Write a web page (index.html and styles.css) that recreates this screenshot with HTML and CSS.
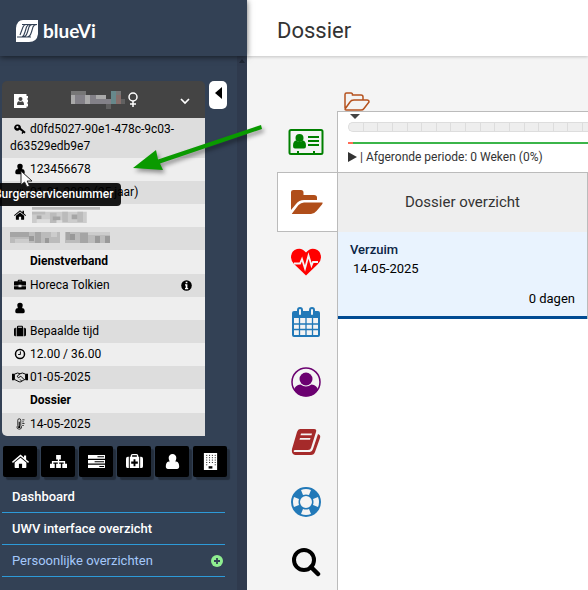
FILE: index.html
```html
<!DOCTYPE html>
<html lang="nl">
<head>
    <meta charset="UTF-8">
    <meta name="viewport" content="width=device-width, initial-scale=1.0">
    <title>Dossier</title>
    <link rel="stylesheet" href="styles.css">
</head>
<body>
    <!-- icons that are used more than once -->
    <svg class="sprite" width="0" height="0" aria-hidden="true">
        <symbol id="icon-user" viewBox="0 0 16 16"><path d="M8 1a3.6 3.6 0 0 1 3.6 3.8C11.600 7 10 9 8 9S4.400 7 4.400 4.800A3.600 3.600 0 0 1 8 1zM4.500 8Q6 10 8 10T11.500 8C13.600 8.300 14.300 10.500 14.300 12.800 14.300 14.300 13.500 15 12.300 15H3.700C2.500 15 1.700 14.300 1.700 12.800 1.700 10.500 2.400 8.300 4.500 8z"/><path d="M5 7H11V11H5z"/></symbol>
        <symbol id="icon-home" viewBox="0 0 16 16"><path d="M8 4.500 13.500 9V13.500a.7.7 0 0 1-.7.7H9.500V10.200H6.500V14.200H3.200a.7.7 0 0 1-.7-.7V9z"/><path d="M8 1.500 11.300 4.300V2.300H13.300V6L16 8.300 15.200 9.300 8 3.300.8 9.300 0 8.300z"/></symbol>
    </svg>

    <div class="app">
        <header class="brand">
            <svg class="brand-logo" viewBox="0 0 22 22" aria-hidden="true">
                <path d="M7 0H22V14Q21 22 13 22H0V8Q1 0 7 0z" fill="#fff"/>
                <path d="M1 17H6Q8 16 9 12L10.500 7Q11.500 4.500 14 4.500M7 17Q10 17 11.500 12L13 7Q14 4.500 17 4.500M11 17Q14 17 15.500 12L17 7Q18 4.500 21 4.500M6 4.500H21M1 17H15M4 15 7 7Q8 4.500 10 4.500" fill="none" stroke="#334155" stroke-width="1.100"/>
            </svg>
            <span class="brand-name">blueVi</span>
        </header>
        <header class="page-header">
            <h1>Dossier</h1>
        </header>

        <aside class="sidebar">
            <div class="sidebar-content">
                <div class="person">
                    <div class="person-card">
                        <div class="person-header">
                            <svg class="icon-book" viewBox="0 0 15 15" aria-hidden="true"><path fill="#fff" d="M0 0H12.500V2H14V4.500H13V5.500H14V8.500H13V9.500H14V12.500H12.500V14H0z"/><circle cx="6.500" cy="5" r="2" fill="#444"/><path fill="#444" d="M3 11Q3 7.300 5 7.300Q6.500 8.300 8 7.300Q10 7.300 10 11z"/></svg>
                            <span class="person-name">
                                <svg class="mosaic-name" viewBox="0 0 54 18" aria-hidden="true"><path fill="#777" d="M0 0H15V4H0zM45 0H50V4H45z"/><path fill="#aaa" d="M0 4H4V13H0zM14 4H19V13H14zM25 4H35V8H25z"/><path fill="#838188" d="M4 4H14V13H4zM19 4H25V13H19zM25 8H40V13H25z"/><path fill="#67888b" d="M40 0H45V13H40z"/><path fill="#866e6b" d="M45 4H50V13H45z"/><path fill="#606060" d="M35 13H40V18H35zM50 8H54V13H50z"/></svg>
                                <svg class="icon-female" viewBox="0 0 12 16" aria-hidden="true"><circle cx="6" cy="5" r="4" fill="none" stroke="#fff" stroke-width="1.500"/><path d="M6 9V15M3 12H9" stroke="#fff" stroke-width="1.500"/></svg>
                            </span>
                            <svg class="icon-chevron" viewBox="0 0 10 8" aria-hidden="true"><path d="M1 2 5 6 9 2" fill="none" stroke="#fff" stroke-width="1.700"/></svg>
                        </div>
                        <ul class="person-rows">
                            <li><span class="row-icon"><svg viewBox="0 0 16 16" aria-hidden="true"><path fill-rule="evenodd" d="M5 2a4 4 0 0 1 4.200 4.700L15.500 12 14 14 12.500 13 11.500 14.500 10 13.500 11 11.500 7.500 9A4.200 4.200 0 1 1 5 2zm-.5 2A1.500 1.500 0 1 0 6 5.500 1.500 1.500 0 0 0 4.500 4z"/></svg></span>d0fd5027-90e1-478c-9c03-d63529edb9e7</li>
                            <li class="bsn"><span class="row-icon"><svg><use href="#icon-user"/></svg></span>123456678
                                <svg class="pointer" viewBox="0 0 13 18" aria-hidden="true"><path d="M1 1V15L4.500 12 7 17 9.500 16 7.200 11H12z" fill="#fff" stroke="#222"/></svg>
                                <span class="tooltip" role="tooltip">Burgerservicenummer</span>
                            </li>
                            <li><span class="row-icon"><svg viewBox="0 0 16 16" aria-hidden="true"><path d="M2 8H14V14H2zM4 4H5V7H4zM8 4H9V7H8zM11 4H12V7H11z"/></svg></span>01-01-2000 (25 jaar)</li>
                            <li><span class="row-icon"><svg><use href="#icon-home"/></svg></span><svg class="mosaic-street" viewBox="0 0 72 18" aria-hidden="true"><path fill="#b9b9b9" d="M0 0H72V3H0z"/><path fill="#ccc" d="M0 5H58V17H0z"/><path fill="#bbb" d="M0 5H14V8H0zM19 6H26V17H19zM32 5H38V16H32zM48 5H54V16H48z"/><path fill="#a5a5a5" d="M5 9H10V13H5zM22 10H30V14H22zM42 8H48V13H42z"/><path fill="#ddd" d="M5 13H19V17H5zM26 14H32V17H26z"/></svg></li>
                            <li><svg class="mosaic-town" viewBox="0 0 100 11" aria-hidden="true"><path fill="#bbb" d="M0 0H50V11H0zM55 0H100V11H55z"/><path fill="#a5a5a5" d="M0 0H19V5H0zM25 0H31V11H25zM56 0H60V8H56zM70 1H78V11H70z"/><path fill="#999" d="M19 4H24V9H19zM35 6H39V11H35zM60 2H65V8H60zM85 4H90V11H85zM95 4H100V11H95z"/><path fill="#ccc" d="M5 7H19V11H5zM41 0H47V5H41zM78 0H100V3H78z"/></svg></li>
                            <li class="row-title"><strong>Dienstverband</strong></li>
                            <li><span class="row-icon"><svg viewBox="0 0 16 16" aria-hidden="true"><path fill-rule="evenodd" d="M5 3V2Q5 1 6 1H10Q11 1 11 2V3H15Q16 3 16 4V8.500H10V7.500H6V8.500H0V4Q0 3 1 3zm1.300 0H9.700V2.200H6.300zM0 9.500H6V11H10V9.500H16V13Q16 14 15 14H1Q0 14 0 13z"/></svg></span>Horeca Tolkien
                                <svg class="icon-info" viewBox="0 0 11 11" aria-hidden="true"><circle cx="5.500" cy="5.500" r="5.300"/><path fill="#fff" d="M4.700 1.700H6.400V3.300H4.700zM4 4.300H6.400V8H7.200V9.200H4V8H4.700V5.400H4z"/></svg></li>
                            <li><span class="row-icon"><svg><use href="#icon-user"/></svg></span></li>
                            <li><span class="row-icon"><svg viewBox="0 0 16 16" aria-hidden="true"><path fill-rule="evenodd" d="M4 3.500V2.500Q4 1 5.500 1H10.500Q12 1 12 2.500V3.500H12.500V15H3.500V3.500zm1.500 0H10.500V2.400H5.500zM2.500 3.500V15H2Q0 15 0 13V5.500Q0 3.500 2 3.500zM13.500 3.500H14Q16 3.500 16 5.500V13Q16 15 14 15H13.500z"/></svg></span>Bepaalde tijd</li>
                            <li><span class="row-icon"><svg viewBox="0 0 16 16" aria-hidden="true"><circle cx="8" cy="8" r="6" fill="none" stroke="#000" stroke-width="2"/><path d="M8.500 4.500V8.700H5.500" fill="none" stroke="#000" stroke-width="1.300"/></svg></span>12.00 / 36.00</li>
                            <li><span class="row-icon"><svg class="icon-shake" viewBox="0 0 20 14" aria-hidden="true"><path d="M0 3H3V11H0zM17 3H20V11H17z"/><path d="M3 3.500 7 2 10 3 13 2 17 3.500V10L15 10.500 11 13H9L3 10zM10 3 6.500 6 8 8 11 6 15 10M12 12 10 10" fill="none" stroke="#000" stroke-width="1.200"/></svg></span>01-05-2025</li>
                            <li class="row-title"><strong>Dossier</strong></li>
                            <li><span class="row-icon"><svg viewBox="0 0 16 16" aria-hidden="true"><path d="M5 10V3Q5 1 7 1T9 3V10Q11 12 9.500 14Q7 16 4.500 14Q3 12 5 10z" fill="none" stroke="#000"/><path d="M6.300 5H7.700V10.500Q9 11.500 8.500 13Q7 14.200 5.500 13Q5 11.500 6.300 10.500zM11 2H14V3H11zM11 4.500H13V5.500H11zM11 7H14V8H11zM11 9.500H13V10.500H11z"/></svg></span>14-05-2025</li>
                        </ul>
                    </div>
                    <button class="collapse" type="button" aria-label="Inklappen"><svg viewBox="0 0 7 12" aria-hidden="true"><path d="M7 0V12L0 6z"/></svg></button>
                </div>

                <div class="shortcuts">
                    <button type="button" aria-label="Home"><svg><use href="#icon-home"/></svg></button>
                    <button type="button" aria-label="Organisatie"><svg viewBox="0 0 18 16" aria-hidden="true"><path d="M6.500 1H11.500V6H9.700V7.500H16V10.500H18V15H13V10.500H14.500V9H9.700V10.500H11.500V15H6.500V10.500H8.300V9H3.500V10.500H5V15H0V10.500H2V7.500H8.300V6H6.500z"/></svg></button>
                    <button type="button" aria-label="Taken"><svg viewBox="0 0 18 16" aria-hidden="true"><path fill-rule="evenodd" d="M0 1H18V5H0zM10 2.500V3.500H17V2.500zM0 6.500H18V10H0zM7 7.800V8.800H17V7.800zM0 11.500H18V15H0zM12 12.800V13.800H17V12.800z"/></svg></button>
                    <button type="button" aria-label="Verzuim"><svg viewBox="0 0 18 16" aria-hidden="true"><path fill-rule="evenodd" d="M5 3V2Q5 0 7 0H11Q13 0 13 2V3H14V15H4V3zm1.500 0H11.500V1.500H6.500zM8 5.500V8H5.500V10.500H8V13H10V10.500H12.500V8H10V5.500zM3 3V15H2Q0 15 0 13V5Q0 3 2 3zM15 3H16Q18 3 18 5V13Q18 15 16 15H15z"/></svg></button>
                    <button type="button" aria-label="Werknemer"><svg><use href="#icon-user"/></svg></button>
                    <button type="button" aria-label="Werkgever"><svg viewBox="0 0 16 18" aria-hidden="true"><path d="M1 0H15V18H1z"/><path d="M4 2V14M7 2V12M10 2V12M13 2V14" stroke="#000" stroke-dasharray="1 1.500" fill="none"/><path d="M6 14H10V16.500H6z" fill="#000"/></svg></button>
                </div>

                <nav class="menu">
                    <a href="#">Dashboard</a>
                    <a href="#">UWV interface overzicht</a>
                    <a class="menu-group" href="#">Persoonlijke overzichten
                        <svg viewBox="0 0 12 12" aria-hidden="true"><circle cx="6" cy="6" r="6" fill="#8fee90"/><path d="M6 3V9M3 6H9" stroke="#334155" stroke-width="1.800"/></svg>
                    </a>
                </nav>
            </div>
            <div class="scroll-strip"><svg viewBox="0 0 6 4" aria-hidden="true"><path d="M0 4H6L3 0z"/></svg></div>
        </aside>

        <main class="main">
            <nav class="tabs">
                <a href="#" aria-label="Persoon"><svg viewBox="0 0 36 28" fill="green" aria-hidden="true"><rect x="1.500" y="2" width="33" height="24" rx="1.500" fill="none" stroke="green" stroke-width="2"/><circle cx="11.500" cy="10" r="4"/><path d="M5 18Q5 12.500 8.500 12.500 11.500 15.500 14.500 12.500 18 12.500 18 18 18 20.500 16 20.500H7Q5 20.500 5 18zM20 8H31V10H20zM20 12H31V14H20zM20 16H31V18H20zM9 23H11V26H9zM25 23H27V26H25z"/></svg></a>
                <a href="#" class="active" aria-label="Dossier"><svg viewBox="0 0 32 26" fill="#b04e1a" aria-hidden="true"><path d="M0 21V3Q0 1 2.500 1H10Q12.500 1 12.500 3.500V6H23Q26 6 26 8.500V11H13Q8 11 5 15zM1 24.500 7.500 16Q10 13.500 13 13.500H31.500Q32 14 31 15.500L25.500 22Q23 25 20 25H1.500Q.5 25 1 24.500z"/></svg></a>
                <a href="#" aria-label="Verzuim"><svg viewBox="0 0 30 27" fill="red" aria-hidden="true"><path d="M15 4Q19-1 24 .5 30 2 30 9 30 12 27 15.500L15 27 3 15.500Q0 12 0 9 0 2 6 .5 11-1 15 4z"/><path d="M3 15H9L11 10.500 14 20 17.500 7 20.500 17 22 13.500H27" fill="none" stroke="#f4f4f4" stroke-width="1.800"/></svg></a>
                <a href="#" aria-label="Agenda"><svg viewBox="0 0 28 30" aria-hidden="true"><rect x="1" y="5" width="26" height="24" rx="1" fill="#f4f4f4" stroke="#2279b8" stroke-width="2"/><path d="M1 5H27V11H1z" fill="#2279b8"/><path d="M7.500 11V28M14 11V28M20.500 11V28M2 17H26M2 22.500H26" stroke="#2279b8" stroke-width="1.300"/><rect x="6" y="1" width="4" height="8" rx="2" fill="#f4f4f4" stroke="#2279b8" stroke-width="2"/><rect x="18" y="1" width="4" height="8" rx="2" fill="#f4f4f4" stroke="#2279b8" stroke-width="2"/></svg></a>
                <a href="#" aria-label="Contactpersonen"><svg viewBox="0 0 30 30" fill="#6b0070" aria-hidden="true"><circle cx="15" cy="15" r="14" fill="none" stroke="#6b0070" stroke-width="1.500"/><circle cx="15" cy="12" r="6.500"/><path d="M3 23Q4 18 9.500 17.500 15 21.500 20.500 17.500 26 18 27 23 22 29.500 15 29.500T3 23z"/></svg></a>
                <a href="#" aria-label="Logboek"><svg viewBox="0 0 30 28" fill="#a52a2a" aria-hidden="true"><path fill-rule="evenodd" d="M9 1H23Q26 1 25 4L20 20Q19.500 22 17 22H4Q2 22 3 24H19Q21 24 22 21L27 6Q30 7 29 10L24 24Q23 27 20 27H4Q0 26 1 21L6 4Q7 1 9 1zM10 5.500 9.500 7.300H20.500L21 5.500zM9 10 8.500 11.800H19L19.500 10z"/></svg></a>
                <a href="#" aria-label="Hulp"><svg viewBox="0 0 30 30" aria-hidden="true"><circle cx="15" cy="15" r="10.500" fill="none" stroke="#2279b8" stroke-width="9"/><path d="M10 3Q15 1 20 3L18 8Q15 7 12 8zM10 27Q15 29 20 27L18 22Q15 23 12 22zM3 10Q1 15 3 20L8 18Q7 15 8 12zM27 10Q29 15 27 20L22 18Q23 15 22 12z" fill="#f4f4f4"/></svg></a>
                <a href="#" aria-label="Zoeken"><svg viewBox="0 0 30 30" fill="none" stroke="#000" aria-hidden="true"><circle cx="13" cy="13" r="10" stroke-width="4"/><path d="M20 20 27 27" stroke-width="4.500" stroke-linecap="round"/></svg></a>
            </nav>

            <section class="panel">
                <svg class="period-folder" viewBox="0 0 26 19" aria-hidden="true"><path d="M1 16V2.500Q1 1 2.500 1H7Q8.500 1 8.500 3H17Q19 3 19 5V8H10Q7 8 6 10L1 17Q1 18 2 18H17Q19 18 20 16.500L25 10Q25 8 23 8H19" fill="none" stroke="#b5521e" stroke-width="1.500"/></svg>
                <div class="period">
                    <svg class="period-marker" viewBox="0 0 10 5" aria-hidden="true"><path d="M0 0H10L5 5z"/></svg>
                    <div class="weeks">
                        <span></span><span></span><span></span><span></span><span></span><span></span><span></span><span></span><span></span><span></span><span></span><span></span><span></span><span></span><span></span><span></span>
                    </div>
                    <div class="period-line"></div>
                    <p><svg class="play" viewBox="0 0 9 10" aria-hidden="true"><path d="M0 0 9 5 0 10z"/></svg> | Afgeronde periode: 0 Weken (0%)</p>
                </div>
                <div class="overview">
                    <h2>Dossier overzicht</h2>
                    <article class="case">
                        <h3>Verzuim</h3>
                        <p class="case-date">14-05-2025</p>
                        <p class="case-days">0 dagen</p>
                    </article>
                </div>
            </section>
        </main>
    </div>

    <svg class="arrow" viewBox="0 0 140 56" aria-hidden="true"><path d="M130 4 27 38.500 25 29 2 47 32 49 29 42.500 131 8z"/></svg>
</body>
</html>
```
FILE: styles.css
```css
* {
    box-sizing: border-box;
}

body {
    margin: 0;
    font-family: Roboto, "Liberation Sans", sans-serif;
    font-size: 12px;
    color: #000;
    background-color: #f4f4f4;
}

h1, h2, h3, p, ul {
    margin: 0;
    padding: 0;
    font-weight: 400;
}

a {
    color: inherit;
    text-decoration: none;
}

button {
    padding: 0;
    border: none;
    cursor: pointer;
}

.sprite {
    position: absolute;
}

.app {
    display: grid;
    grid-template-columns: 247px 1fr;
    grid-template-rows: 56px 1fr;
    height: 100vh;
    overflow: hidden;
}

/* top bar */
.brand {
    display: flex;
    align-items: center;
    gap: 5px;
    padding: 6px 16px 0;
    background-color: #334155;
    box-shadow: 0 1px 6px rgba(0, 0, 0, 0.6);
    z-index: 2;
}

.brand-logo {
    width: 22px;
    height: 22px;
}

.brand-name {
    font-family: Lato, sans-serif;
    font-size: 19px;
    font-weight: 700;
    line-height: 22px;
    color: #fff;
}

.page-header {
    display: flex;
    align-items: center;
    padding: 4px 30px 0;
    background-color: #fff;
    box-shadow: 0 1px 3px rgba(0, 0, 0, 0.2);
    z-index: 1;
}

.page-header h1 {
    font-size: 22px;
    color: #333;
}

/* sidebar */
.sidebar {
    display: flex;
    min-height: 0;
    background-color: #334155;
    overflow: hidden;
}

.sidebar-content {
    flex: 1;
    min-width: 0;
    padding: 25px 10px 0 2px;
}

.scroll-strip {
    flex: none;
    width: 10px;
    padding: 3px 2px;
    background-color: #2f3a4d;
}

.scroll-strip svg {
    display: block;
    width: 6px;
    height: 4px;
    fill: #1f2735;
}

.person {
    display: flex;
    align-items: flex-start;
    gap: 4px;
}

.person-card {
    flex: 1;
    min-width: 0;
}

.person-header {
    display: flex;
    align-items: center;
    justify-content: space-between;
    height: 37px;
    padding: 0 15px 0 12px;
    background-color: #444;
    border-radius: 5px 5px 0 0;
}

.icon-book {
    width: 15px;
    height: 15px;
    margin-top: 3px;
}

.person-name {
    display: flex;
    align-items: center;
    gap: 2px;
}

.mosaic-name {
    width: 54px;
    height: 18px;
}

.icon-female {
    width: 12px;
    height: 16px;
}

.icon-chevron {
    width: 10px;
    height: 8px;
    margin-top: 3px;
}

.person-rows {
    list-style: none;
}

.person-rows li {
    position: relative;
    min-height: 23px;
    padding: 3px 20px 3px 8px;
    line-height: 17px;
    background-color: #ddd;
}

.person-rows li:nth-child(even) {
    background-color: #eee;
}

.person-rows li:last-child {
    background-color: #ddd;
    border-radius: 0 0 0 5px;
}

.person-rows .row-title {
    padding: 3px 28px 4px;
}

.row-title strong {
    font-weight: 700;
}

.row-icon {
    display: inline-flex;
    justify-content: center;
    width: 20px;
    vertical-align: -2px;
}

.row-icon svg {
    width: 12px;
    height: 12px;
}

.row-icon .icon-shake {
    width: 16px;
}

.mosaic-street {
    display: inline-block;
    width: 72px;
    height: 17px;
    vertical-align: top;
}

.mosaic-town {
    display: block;
    width: 100px;
    height: 11px;
    margin-top: 2px;
}

.person-rows .icon-info {
    position: absolute;
    top: 6px;
    right: 13px;
    width: 11px;
    height: 11px;
}

.person-rows .bsn {
    z-index: 1;
}

.tooltip {
    position: absolute;
    top: 25px;
    left: -16px;
    padding: 3px 8px;
    border-radius: 4px;
    font-weight: 500;
    color: #fff;
    background-color: rgba(0, 0, 0, 0.9);
}

.pointer {
    position: absolute;
    top: 12px;
    left: 18px;
    z-index: 1;
    width: 13px;
    height: 18px;
}

.collapse {
    display: flex;
    justify-content: center;
    width: 18px;
    height: 28px;
    padding-top: 6px;
    border-radius: 5px;
    background-color: #fff;
}

.collapse svg {
    width: 7px;
    height: 12px;
}

.shortcuts {
    display: flex;
    gap: 4px;
    padding: 10px 0 4px 1px;
}

.shortcuts button {
    display: flex;
    align-items: center;
    justify-content: center;
    width: 34px;
    height: 31px;
    border-radius: 2px;
    background-color: #000;
    box-shadow: 3px 3px 1px rgba(0, 0, 0, 0.3);
}

.shortcuts svg {
    width: 17px;
    height: 17px;
    fill: #fff;
}

.menu a {
    display: flex;
    align-items: center;
    justify-content: space-between;
    height: 32px;
    margin-right: 2px;
    padding: 0 2px 0 10px;
    border-bottom: 1px solid #2d9ad8;
    font-size: 13px;
    font-weight: 500;
    color: #fff;
}

.menu .menu-group {
    font-weight: 400;
    color: #a5c8fa;
}

.menu svg {
    width: 12px;
    height: 12px;
}

/* dossier */
.main {
    display: flex;
    min-width: 0;
    min-height: 0;
    padding: 55px 0 0 30px;
}

.tabs {
    width: 60px;
    padding-top: 1px;
}

.tabs a {
    display: flex;
    align-items: center;
    justify-content: center;
    height: 60px;
    padding-right: 2px;
    border: 1px solid transparent;
}

.tabs .active {
    border-color: #bbb;
    border-right: none;
    background-color: #fff;
}

.tabs svg {
    width: 30px;
    height: 30px;
}

.tabs a:first-child svg {
    width: 36px;
}

.tabs .active svg {
    width: 32px;
}

.panel {
    position: relative;
    flex: 1;
    min-width: 0;
    border-top: 1px solid #bbb;
    border-left: 1px solid #bbb;
    background-color: #fff;
}

.period-folder {
    position: absolute;
    top: -20px;
    left: 6px;
    width: 26px;
    height: 19px;
}

.period {
    padding: 2px 0 6px 10px;
    color: #333;
}

.period-marker {
    display: block;
    width: 10px;
    height: 5px;
    margin: 0 2px 3px;
    fill: #444;
}

.weeks {
    display: grid;
    grid-template-columns: repeat(16, 1fr) 5px;
    height: 10px;
    border: 1px solid #ddd;
    border-right: none;
    border-radius: 5px 0 0 5px;
    background-color: #eee;
}

.weeks span {
    border-right: 1px solid #ddd;
}

.period-line {
    height: 2px;
    margin: 10px 0 4px;
    background: linear-gradient(90deg, #ff6b55 5px, #3bb54a 5px);
}

.period p {
    line-height: 18px;
}

.play {
    width: 9px;
    height: 10px;
    vertical-align: -1px;
    fill: #333;
}

.overview {
    border-top: 1px solid #bbb;
    border-right: 1px solid #bbb;
}

.overview h2 {
    font-size: 15px;
    line-height: 59px;
    text-align: center;
    color: #333;
    background-color: #eee;
}

.case {
    padding: 9px 12px 8px;
    border-bottom: 3px solid #004b93;
    font-size: 13px;
    line-height: 18px;
    background-color: #e9f3fe;
}

.case h3 {
    font-size: 13px;
    font-weight: 500;
    color: #0b2545;
}

.case-date {
    padding: 1px 3px 12px;
}

.case-days {
    text-align: right;
}

/* pointer arrow that lies over the sidebar and the page */
.arrow {
    position: absolute;
    top: 121px;
    left: 131px;
    z-index: 3;
    width: 140px;
    height: 56px;
    fill: #0a9a00;
    filter: drop-shadow(2px 3px 2px rgba(0, 0, 0, 0.4));
}
```
